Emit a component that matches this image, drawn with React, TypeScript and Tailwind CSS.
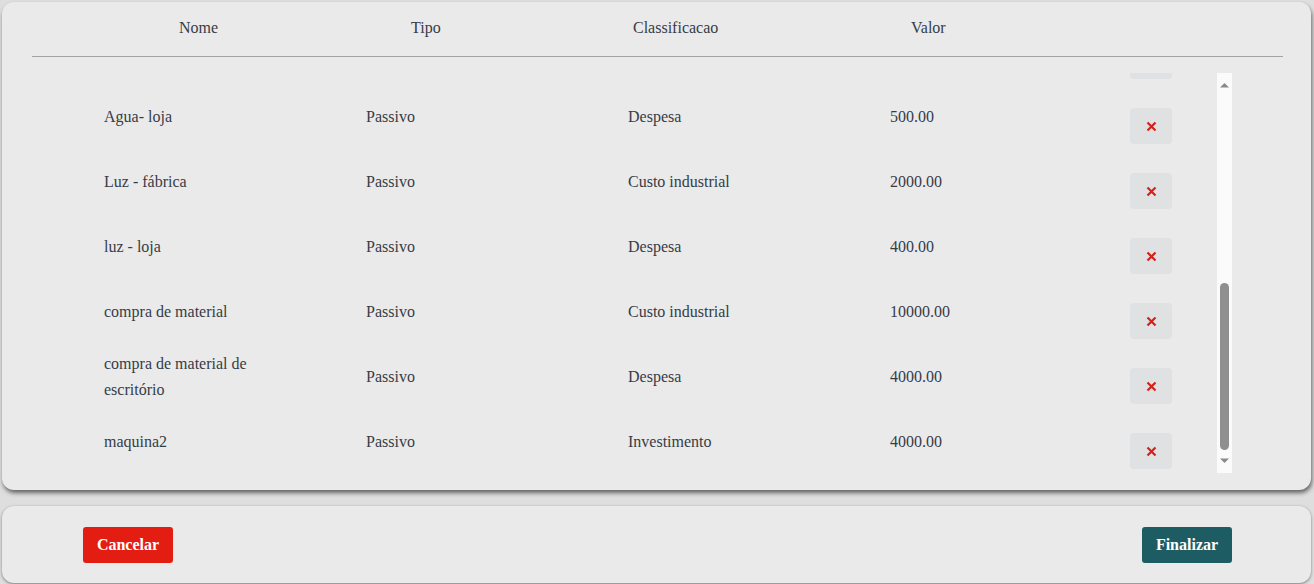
import React, { useEffect, useRef } from "react";

type Row = { nome: string; tipo: string; classe: string; valor: string };

const rows: Row[] = [
  { nome: "Aluguel - loja", tipo: "Passivo", classe: "Despesa", valor: "1500.00" },
  { nome: "Aluguel - fábrica", tipo: "Passivo", classe: "Custo industrial", valor: "3000.00" },
  { nome: "maquina", tipo: "Ativo", classe: "Investimento", valor: "20000.00" },
  { nome: "Salários", tipo: "Passivo", classe: "Despesa", valor: "8000.00" },
  { nome: "Mão de obra", tipo: "Passivo", classe: "Custo industrial", valor: "6000.00" },
  { nome: "Internet", tipo: "Passivo", classe: "Despesa", valor: "150.00" },
  { nome: "Telefone", tipo: "Passivo", classe: "Despesa", valor: "120.00" },
  { nome: "Agua - fábrica", tipo: "Passivo", classe: "Custo industrial", valor: "800.00" },
  { nome: "Agua- loja", tipo: "Passivo", classe: "Despesa", valor: "500.00" },
  { nome: "Luz - fábrica", tipo: "Passivo", classe: "Custo industrial", valor: "2000.00" },
  { nome: "luz - loja", tipo: "Passivo", classe: "Despesa", valor: "400.00" },
  { nome: "compra de material", tipo: "Passivo", classe: "Custo industrial", valor: "10000.00" },
  { nome: "compra de material de escritório", tipo: "Passivo", classe: "Despesa", valor: "4000.00" },
  { nome: "maquina2", tipo: "Passivo", classe: "Investimento", valor: "4000.00" },
];

function XIcon() {
  return (
    <svg width="11" height="11" viewBox="0 0 11 11">
      <path d="M1.5 1.5 L9.5 9.5 M9.5 1.5 L1.5 9.5" stroke="#d3221a" strokeWidth="2.2" strokeLinecap="butt" />
    </svg>
  );
}

function FakeScrollbar() {
  return (
    <div className="w-[15px] h-[400px] bg-[#fbfbfb] flex flex-col items-center">
      <svg width="15" height="15" viewBox="0 0 15 15" className="mt-[6px]">
        <path d="M3 8.5 L7.5 4 L12 8.5 Z" fill="#8a8a8a" />
      </svg>
      <div className="mt-[189px] w-[9px] h-[167px] rounded-full bg-[#8f8f8f]" />
      <svg width="15" height="15" viewBox="0 0 15 15" className="mt-[3px]">
        <path d="M3 5.5 L12 5.5 L7.5 10 Z" fill="#8a8a8a" />
      </svg>
    </div>
  );
}

export default function App() {
  const ref = useRef<HTMLDivElement>(null);
  useEffect(() => {
    if (ref.current) ref.current.scrollTop = ref.current.scrollHeight;
  }, []);

  return (
    <div className="min-h-screen bg-[#dedede] pl-[2px] pt-[2px] [font-family:Liberation_Serif,Times,serif] text-[16px] text-[#363c47]">
      <div className="w-[1309px] rounded-[12px] bg-[#eaeaea] shadow-[1px_3px_4px_rgba(0,0,0,0.55)] pb-[17px]">
        <div className="ml-[30px] w-[1251px] h-[55px] flex items-center pb-[3px] border-b border-[#a3a3a3]">
          <span className="ml-[147px] w-[232px]">Nome</span>
          <span className="w-[222px]">Tipo</span>
          <span className="w-[278px]">Classificacao</span>
          <span>Valor</span>
        </div>
        <div className="ml-[82px] mt-[16px] w-[1148px] h-[400px] flex">
          <div
            ref={ref}
            className="w-[1133px] h-[400px] overflow-y-auto [scrollbar-width:none] [&::-webkit-scrollbar]:hidden"
          >
            {rows.map((r, i) => (
              <div key={i} className="grid grid-cols-[262px_262px_262px_240px_auto] h-[65px] pl-5 leading-[26px]">
                <div className="self-center w-[170px] pt-[3px]">{r.nome}</div>
                <div className="self-center pt-[3px]">{r.tipo}</div>
                <div className="self-center pt-[3px]">{r.classe}</div>
                <div className="self-center pt-[3px]">{r.valor}</div>
                <div className="self-end mb-1">
                  <button className="w-[42px] h-[36px] rounded-[4px] bg-[#e0e1e3] flex items-center justify-center">
                    <XIcon />
                  </button>
                </div>
              </div>
            ))}
          </div>
          <FakeScrollbar />
        </div>
      </div>
      <div className="mt-[16px] w-[1309px] h-[77px] rounded-[12px] bg-[#eaeaea] shadow-[0px_1px_3px_rgba(0,0,0,0.45)] flex items-center justify-between pl-[81px] pr-[79px]">
        <button className="w-[90px] h-[36px] rounded-[3px] bg-[#e31d12] text-white font-bold text-[16px]">Cancelar</button>
        <button className="w-[90px] h-[36px] rounded-[3px] bg-[#1e5c64] text-white font-bold text-[16px]">Finalizar</button>
      </div>
    </div>
  );
}
